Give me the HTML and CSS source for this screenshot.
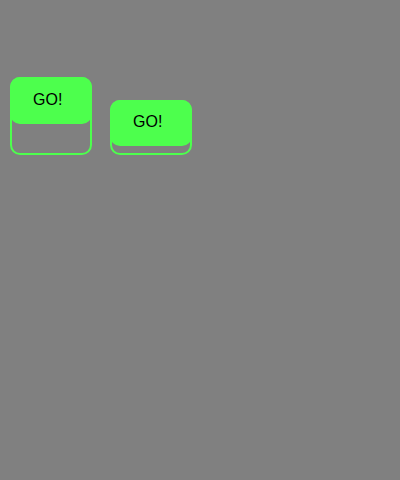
FILE: index.html
```html
<!DOCTYPE html>
<html>
<head>
<meta charset="utf-8">
<link rel="stylesheet" href="styles.css">
</head>
<body>
<div class="row">
  <button class="btn btn-up"><span class="front">GO!</span></button>
  <button class="btn btn-down"><span class="front">GO!</span></button>
</div>
</body>
</html>
```
FILE: styles.css
```css
html, body {
  margin: 0;
  background: #808080;
}
.row {
  display: flex;
  align-items: flex-end;
  gap: 18px;
  padding: 77px 0 0 10px;
}
.btn {
  width: 82px;
  box-sizing: border-box;
  border: 2px solid #4dff4d;
  border-radius: 10px;
  background: transparent;
  padding: 0;
  display: flex;
  flex-direction: column;
  font: 16px "Liberation Sans", Arial, sans-serif;
  color: #000;
}
.front {
  display: flex;
  align-items: center;
  box-sizing: border-box;
  margin: -2px -2px 0;
  padding: 0 0 2px 23px;
  background: #4dff4d;
  border-radius: 10px;
}
.btn-up {
  height: 78px;
}
.btn-up .front {
  height: 47px;
}
.btn-down {
  height: 55px;
}
.btn-down .front {
  height: 46px;
}
```
